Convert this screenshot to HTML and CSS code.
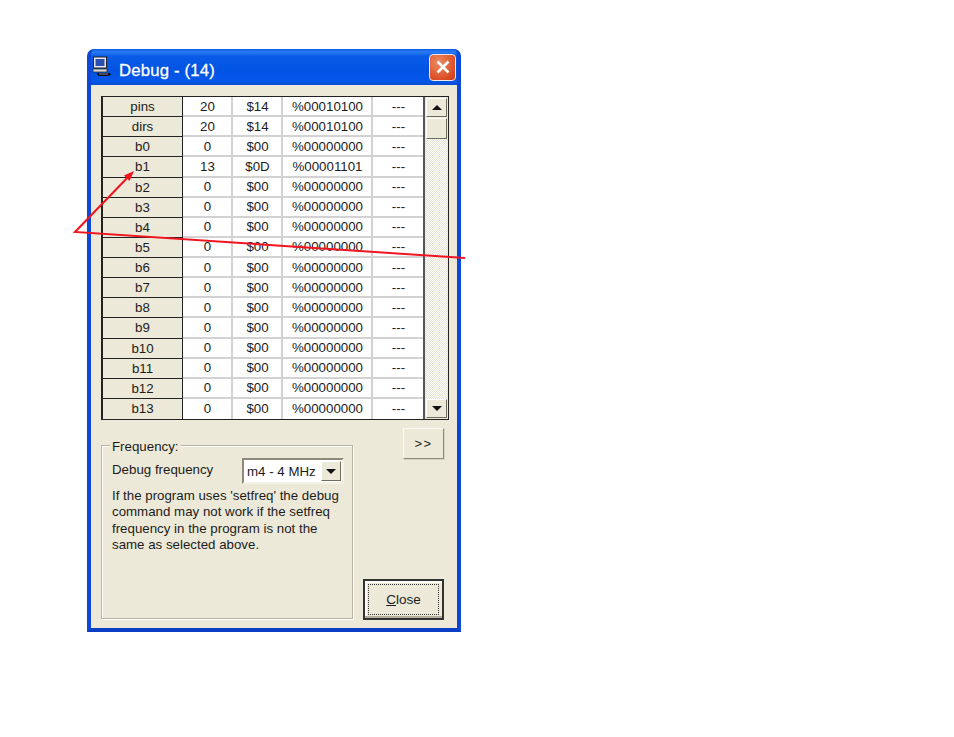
FILE: index.html
```html
<!DOCTYPE html>
<html lang="en">
<head>
<meta charset="utf-8">
<title>Debug - (14)</title>
<link rel="stylesheet" href="styles.css">
</head>
<body>
<div class="window">
  <div class="titlebar">
    <svg class="app-icon" width="20" height="22" viewBox="0 0 20 22">
      <rect x="1.500" y="1" width="13" height="11" fill="#e8e8f0" stroke="#222"/>
      <rect x="3.500" y="3" width="9" height="7" fill="#2a4fb0"/>
      <path d="M1 13h14v3H1z" fill="#d8d8d8" stroke="#333" stroke-width=".8"/>
      <path d="M5 17h13l1 2-4 1H6z" fill="#111"/>
      <path d="M7 18h9" stroke="#9ac" stroke-width=".8"/>
    </svg>
    <span class="title">Debug - (14)</span>
    <span class="close-x">
      <svg width="16" height="16" viewBox="0 0 16 16"><path d="M2.500 2.500l11 11M13.500 2.500l-11 11" stroke="#fff" stroke-width="2.600"/></svg>
    </span>
  </div>
  <div class="client">
    <div class="grid-frame">
      <div class="grid">
        <div class="hd">pins</div><div class="c">20</div><div class="c">$14</div><div class="c">%00010100</div><div class="c">---</div>
        <div class="hd">dirs</div><div class="c">20</div><div class="c">$14</div><div class="c">%00010100</div><div class="c">---</div>
        <div class="hd">b0</div><div class="c">0</div><div class="c">$00</div><div class="c">%00000000</div><div class="c">---</div>
        <div class="hd">b1</div><div class="c">13</div><div class="c">$0D</div><div class="c">%00001101</div><div class="c">---</div>
        <div class="hd">b2</div><div class="c">0</div><div class="c">$00</div><div class="c">%00000000</div><div class="c">---</div>
        <div class="hd">b3</div><div class="c">0</div><div class="c">$00</div><div class="c">%00000000</div><div class="c">---</div>
        <div class="hd">b4</div><div class="c">0</div><div class="c">$00</div><div class="c">%00000000</div><div class="c">---</div>
        <div class="hd">b5</div><div class="c">0</div><div class="c">$00</div><div class="c">%00000000</div><div class="c">---</div>
        <div class="hd">b6</div><div class="c">0</div><div class="c">$00</div><div class="c">%00000000</div><div class="c">---</div>
        <div class="hd">b7</div><div class="c">0</div><div class="c">$00</div><div class="c">%00000000</div><div class="c">---</div>
        <div class="hd">b8</div><div class="c">0</div><div class="c">$00</div><div class="c">%00000000</div><div class="c">---</div>
        <div class="hd">b9</div><div class="c">0</div><div class="c">$00</div><div class="c">%00000000</div><div class="c">---</div>
        <div class="hd">b10</div><div class="c">0</div><div class="c">$00</div><div class="c">%00000000</div><div class="c">---</div>
        <div class="hd">b11</div><div class="c">0</div><div class="c">$00</div><div class="c">%00000000</div><div class="c">---</div>
        <div class="hd">b12</div><div class="c">0</div><div class="c">$00</div><div class="c">%00000000</div><div class="c">---</div>
        <div class="hd">b13</div><div class="c">0</div><div class="c">$00</div><div class="c">%00000000</div><div class="c">---</div>
      </div>
      <div class="scrollbar">
        <div class="sb-btn"><span class="tri-up"></span></div>
        <div class="sb-thumb"></div>
        <div class="sb-track"></div>
        <div class="sb-btn"><span class="tri-down"></span></div>
      </div>
    </div>
    <div class="lower">
      <div class="group">
        <span class="legend">Frequency:</span>
        <div class="freq-row">
          <span>Debug frequency</span>
          <div class="combo"><span class="combo-val">m4 - 4 MHz</span><span class="combo-btn"><span class="tri-down"></span></span></div>
        </div>
        <p class="note">If the program uses 'setfreq' the debug command may not work if the setfreq frequency in the program is not the same as selected above.</p>
      </div>
      <div class="actions">
        <div class="btn more">&gt;&gt;</div>
        <div class="btn close"><span class="focus"><span><u>C</u>lose</span></span></div>
      </div>
    </div>
  </div>
</div>
<svg class="annot" width="954" height="737" viewBox="0 0 954 737">
  <path d="M131 174L75 232L465 258" fill="none" stroke="#f0141e" stroke-width="2"/>
  <path d="M134 171l-10 4.500 5.500 5.500z" fill="#f0141e"/>
</svg>
</body>
</html>
```
FILE: styles.css
```css
* { box-sizing: border-box; }
html, body { margin: 0; height: 100%; background: #fff; }
body {
  padding: 49px 0 0 87px;
  font-family: "Liberation Sans", Arial, sans-serif;
  font-size: 13.300px;
  color: #1c1c1c;
  overflow: hidden;
}
.window {
  width: 374px;
  height: 583px;
  display: flex;
  flex-direction: column;
  border-radius: 7px 7px 0 0;
  overflow: hidden;
  background: #0f50e0;
  border: solid #0b48d8;
  border-width: 0 4px 4px;
  border-bottom-color: #0a3fc4;
}
.titlebar {
  height: 36px;
  flex: none;
  margin: 0 -4px;
  padding: 0 5px;
  display: flex;
  align-items: center;
  background: linear-gradient(180deg, #0a5ae6 0%, #2a7cf4 8%, #0a5ce8 20%, #0052e2 60%, #0458ea 88%, #0a4cd0 100%);
  color: #fff;
}
.app-icon { flex: none; margin: 0 6px 0 0; }
.title {
  font-size: 16.700px;
  -webkit-text-stroke: .3px #fff;
  flex: 1;
  letter-spacing: .2px;
  padding: 7px 0 0 1px;
}
.close-x {
  width: 27px;
  height: 27px;
  flex: none;
  display: flex;
  align-items: center;
  justify-content: center;
  border: 1px solid #f4e8e0;
  border-radius: 4px;
  background: radial-gradient(circle at 35% 30%, #ee8a62, #dc4f26 70%, #c83c18);
}
.client {
  flex: 1;
  background: #ece9d8;
  padding: 11px 13px 8px 10px;
  display: flex;
  flex-direction: column;
}
.grid-frame {
  width: 348px;
  height: 324px;
  margin-right: -3px;
  flex: none;
  display: flex;
  border: 1px solid #222;
  border-left-width: 2px;
}
.grid {
  width: 320px;
  flex: none;
  display: grid;
  grid-template-columns: 80px 50px 50px 90px 50px;
  grid-template-rows: repeat(16, 1fr);
  background: #fff;
}
.hd, .c {
  display: flex;
  align-items: center;
  justify-content: center;
  min-height: 0;
}
.hd {
  background: #ece9d8;
  border-right: 1.500px solid #222;
  border-bottom: 1.500px solid #222;
}
.c {
  background: #fff;
  border-right: 2px solid #d2d2d2;
  border-bottom: 2px solid #d2d2d2;
  padding-left: 1px;
}
.hd:nth-last-child(5), .c:nth-last-child(-n+4) { border-bottom: 0; }
.c:nth-child(5n) { border-right: 0; }
.scrollbar {
  flex: 1;
  display: flex;
  flex-direction: column;
  background: #ece9d8;
  border-left: 2px solid #555;
  padding: 1px;
}
.sb-btn, .sb-thumb {
  flex: none;
  display: flex;
  align-items: center;
  justify-content: center;
  background: #ece9d8;
  border: 1px solid;
  border-color: #fff #6f6c60 #6f6c60 #fff;
}
.sb-btn { height: 19px; }
.sb-thumb { height: 21px; margin-top: 1px; }
.sb-track {
  flex: 1;
  background-image: repeating-conic-gradient(#ffffff 0 25%, #e6e3d2 0 50%);
  background-size: 2px 2px;
}
.tri-up, .tri-down {
  display: block;
  width: 0;
  height: 0;
  border-left: 5px solid transparent;
  border-right: 5px solid transparent;
}
.tri-up { border-bottom: 5px solid #111; }
.tri-down { border-top: 5px solid #111; }
.lower {
  flex: 1;
  display: flex;
  width: 343px;
}
.group {
  position: relative;
  width: 252px;
  height: 174px;
  flex: none;
  margin-top: 25px;
  border: 1px solid #b8b5a4;
  box-shadow: 1px 1px 0 #fff, inset 1px 1px 0 #fff;
  padding: 14px 9px 0 10px;
}
.legend {
  position: absolute;
  top: -7px;
  left: 8px;
  padding: 0 2px;
  background: #ece9d8;
  line-height: 15px;
}
.freq-row {
  display: flex;
  justify-content: space-between;
  align-items: flex-start;
  line-height: 20px;
}
.combo {
  width: 102px;
  height: 26px;
  margin: -2px -1px 0 0;
  flex: none;
  display: flex;
  align-items: center;
  background: #fff;
  border: 2px solid;
  border-color: #8d8a7c #f4f2e6 #f4f2e6 #8d8a7c;
  padding-right: 1px;
}
.combo-val { flex: 1; padding-left: 3px; padding-top: 1px; }
.combo-btn {
  width: 20px;
  height: 20px;
  flex: none;
  display: flex;
  align-items: center;
  justify-content: center;
  background: #ece9d8;
  border: 1px solid;
  border-color: #fff #6f6c60 #6f6c60 #fff;
}
.note {
  margin: 4px 0 0;
  width: 232px;
  line-height: 16.300px;
}
.actions {
  flex: 1;
  margin-top: 8px;
  height: 192px;
  display: flex;
  flex-direction: column;
  justify-content: space-between;
  align-items: flex-end;
}
.btn {
  display: flex;
  align-items: center;
  justify-content: center;
  background: #ece9d8;
}
.more {
  width: 41px;
  height: 31px;
  border: 1px solid;
  border-color: #fbfaf5 #8d8a7c #8d8a7c #fbfaf5;
  box-shadow: 1px 1px 0 #d6d3c2;
  font-size: 13px;
  letter-spacing: 1.500px;
}
.close {
  width: 81px;
  height: 41px;
  border: 2px solid #333;
  padding: 3px;
  box-shadow: inset 0 -2px 0 #b0ad9c, inset 2px 2px 0 #fbfaf5;
}
.focus {
  flex: 1;
  align-self: stretch;
  display: flex;
  align-items: center;
  justify-content: center;
  border: 1.500px dotted #333;
  font-size: 13.500px;
}
.annot {
  position: absolute;
  top: 0;
  left: 0;
  pointer-events: none;
}
```
